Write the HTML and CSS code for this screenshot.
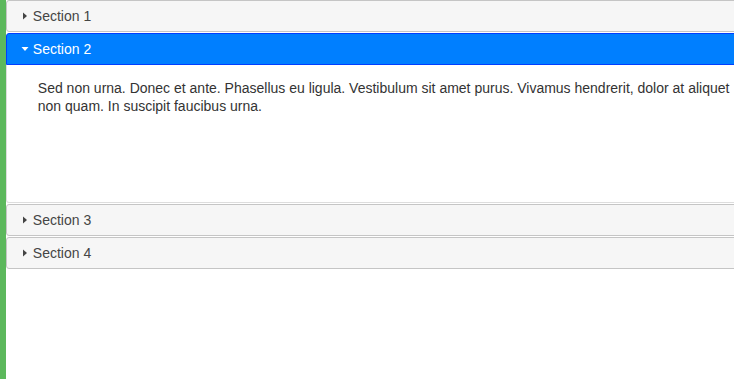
FILE: index.html
```html
<!DOCTYPE html>
<html>
<head>
<meta charset="utf-8">
<link rel="stylesheet" href="styles.css">
</head>
<body>
<div class="page">
  <div class="strip"></div>
  <div class="main">
    <div class="accordion">
      <h3 class="header first"><span class="icon"><svg width="16" height="16" viewBox="0 0 16 16"><path d="M6 4.5 L10 8 L6 11.5 Z" fill="#444"/></svg></span>Section 1</h3>
      <h3 class="header active"><span class="icon"><svg width="16" height="16" viewBox="0 0 16 16"><path d="M4.5 6 L11.5 6 L8 10 Z" fill="#fff"/></svg></span>Section 2</h3>
      <div class="content">
        <p>Sed non urna. Donec et ante. Phasellus eu ligula. Vestibulum sit amet purus. Vivamus hendrerit, dolor at aliquet non quam. In suscipit faucibus urna.</p>
      </div>
      <h3 class="header"><span class="icon"><svg width="16" height="16" viewBox="0 0 16 16"><path d="M6 4.5 L10 8 L6 11.5 Z" fill="#444"/></svg></span>Section 3</h3>
      <h3 class="header"><span class="icon"><svg width="16" height="16" viewBox="0 0 16 16"><path d="M6 4.5 L10 8 L6 11.5 Z" fill="#444"/></svg></span>Section 4</h3>
    </div>
  </div>
</div>
</body>
</html>
```
FILE: styles.css
```css
html, body {
  margin: 0;
  padding: 0;
  overflow: hidden;
  background: #fff;
}
.page {
  display: flex;
  min-height: 379px;
}
.strip {
  width: 6px;
  flex: none;
  background: #5cb85c;
}
.main {
  flex: none;
}
.accordion {
  width: 765px;
  font-family: "Liberation Sans", Arial, sans-serif;
  font-size: 14px;
}
.header {
  display: flex;
  align-items: center;
  margin: 1px 0 0 0;
  padding: 7px 7px 7px 9.8px;
  border: 1px solid #c5c5c5;
  border-radius: 3px;
  background: #f6f6f6;
  color: #454545;
  font-size: 14px;
  font-weight: normal;
  line-height: 16px;
}
.header.first {
  margin-top: 0;
}
.icon {
  width: 16px;
  height: 16px;
  display: flex;
  align-items: center;
  flex: none;
}
.icon svg {
  display: block;
}
.header.active {
  background: #007fff;
  border-color: #003eff;
  color: #fff;
  border-bottom-left-radius: 0;
  border-bottom-right-radius: 0;
}
.content {
  height: 109px;
  padding: 14px 30.8px;
  border: 1px solid #dddddd;
  border-top: 0;
  border-radius: 0 0 3px 3px;
  background: #fff;
  color: #333;
}
.content p {
  margin: 0;
  line-height: 18px;
}
```
